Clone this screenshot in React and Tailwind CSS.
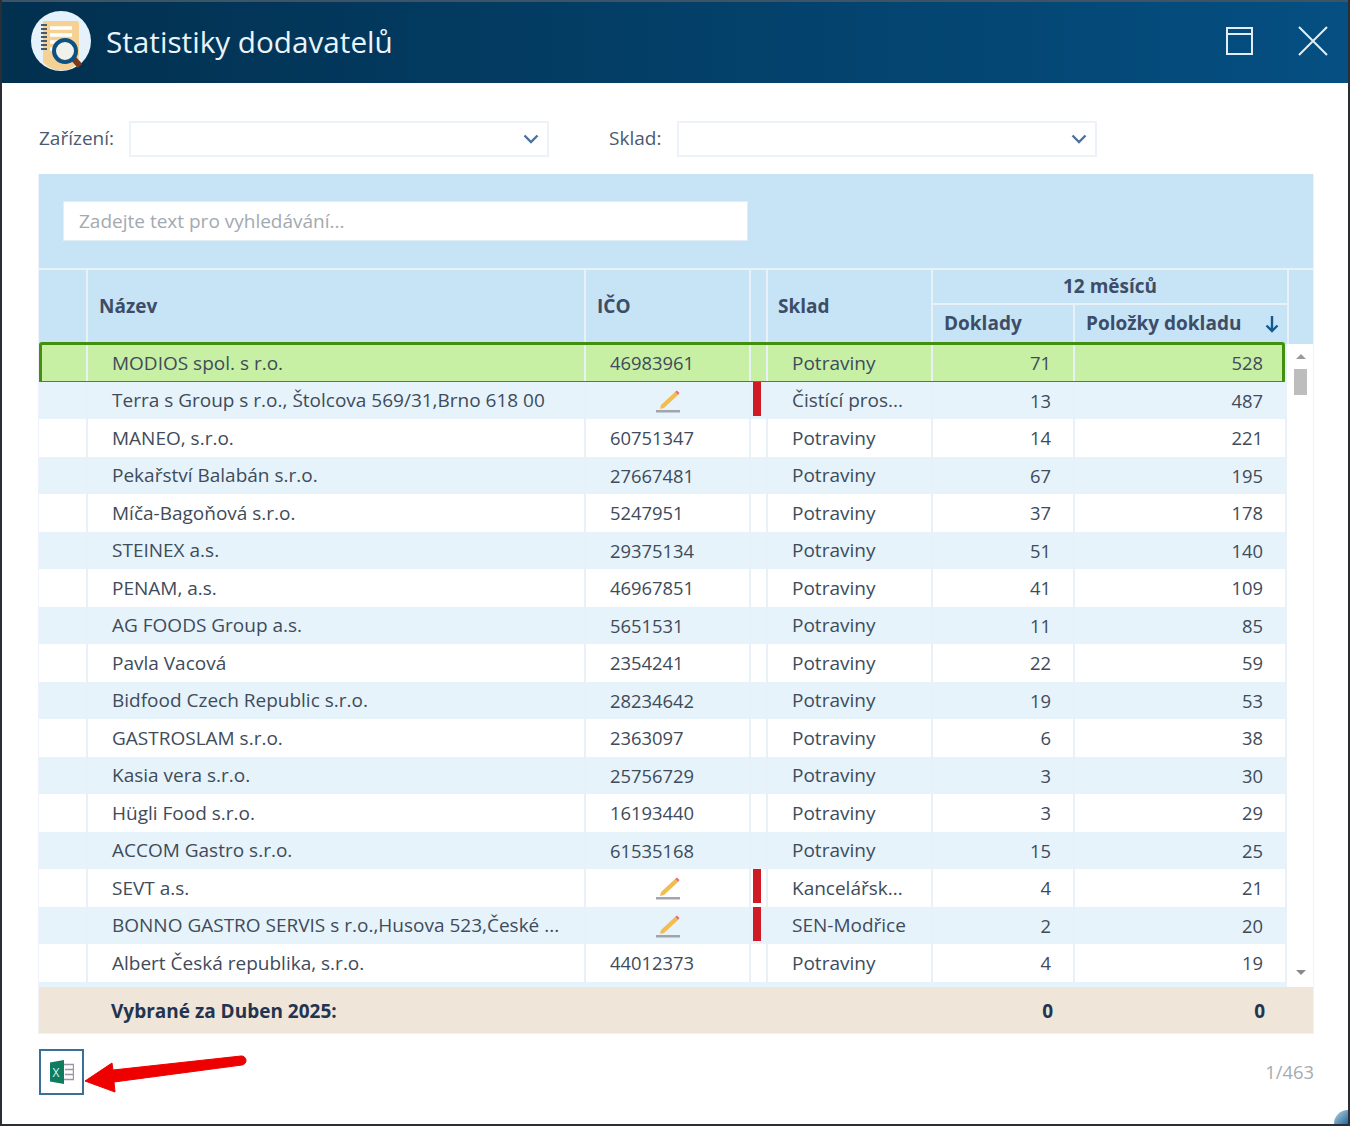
import React from 'react';

const rows = [
  { name: 'MODIOS spol. s r.o.', ico: '46983961', sklad: 'Potraviny', doklady: 71, polozky: 528 },
  { name: 'Terra s Group s r.o., Štolcova 569/31,Brno 618 00', edit: true, sklad: 'Čistící pros...', doklady: 13, polozky: 487 },
  { name: 'MANEO, s.r.o.', ico: '60751347', sklad: 'Potraviny', doklady: 14, polozky: 221 },
  { name: 'Pekařství Balabán s.r.o.', ico: '27667481', sklad: 'Potraviny', doklady: 67, polozky: 195 },
  { name: 'Míča-Bagoňová s.r.o.', ico: '5247951', sklad: 'Potraviny', doklady: 37, polozky: 178 },
  { name: 'STEINEX a.s.', ico: '29375134', sklad: 'Potraviny', doklady: 51, polozky: 140 },
  { name: 'PENAM, a.s.', ico: '46967851', sklad: 'Potraviny', doklady: 41, polozky: 109 },
  { name: 'AG FOODS Group a.s.', ico: '5651531', sklad: 'Potraviny', doklady: 11, polozky: 85 },
  { name: 'Pavla Vacová', ico: '2354241', sklad: 'Potraviny', doklady: 22, polozky: 59 },
  { name: 'Bidfood Czech Republic s.r.o.', ico: '28234642', sklad: 'Potraviny', doklady: 19, polozky: 53 },
  { name: 'GASTROSLAM s.r.o.', ico: '2363097', sklad: 'Potraviny', doklady: 6, polozky: 38 },
  { name: 'Kasia vera s.r.o.', ico: '25756729', sklad: 'Potraviny', doklady: 3, polozky: 30 },
  { name: 'Hügli Food s.r.o.', ico: '16193440', sklad: 'Potraviny', doklady: 3, polozky: 29 },
  { name: 'ACCOM Gastro s.r.o.', ico: '61535168', sklad: 'Potraviny', doklady: 15, polozky: 25 },
  { name: 'SEVT a.s.', edit: true, sklad: 'Kancelářsk...', doklady: 4, polozky: 21 },
  { name: 'BONNO GASTRO SERVIS s r.o.,Husova 523,České ...', edit: true, sklad: 'SEN-Modřice', doklady: 2, polozky: 20 },
  { name: 'Albert Česká republika, s.r.o.', ico: '44012373', sklad: 'Potraviny', doklady: 4, polozky: 19 },
];

const Logo = () => (
  <svg width="62" height="62" viewBox="0 0 62 62">
    <circle cx="31" cy="31" r="30" fill="#e6f2fb" />
    <path d="M13 11 H46 a3 3 0 0 1 3 3 V46 a15 15 0 0 1 -12 14 H25 A30 30 0 0 1 13 52 Z" fill="#f5d193" />
    <path d="M11 15h6M11 19h6M11 23h6M11 27h6M11 31h6M11 35h6M11 39h6" stroke="#4b5a66" strokeWidth="2" />
    <path d="M20 18h22M20 25h22M20 32h8M20 39h6" stroke="#fff" strokeWidth="3.5" />
    <path d="M43 48 L50 56" stroke="#7a3a1e" strokeWidth="6" />
    <circle cx="35" cy="41" r="11" fill="#f1f1ec" stroke="#0d5183" strokeWidth="4" />
  </svg>
);

const Chevron = () => (
  <svg width="16" height="10" viewBox="0 0 16 10" fill="none" stroke="#4a739f" strokeWidth="2.4">
    <path d="M1.5 1.5 L8 8 L14.5 1.5" />
  </svg>
);

const Pencil = () => (
  <svg width="26" height="24" viewBox="0 0 26 24">
    <path d="M6 16 L20 3 L23 6 L9 19 L5 20 Z" fill="#f3bc4f" />
    <path d="M20 3 L22 1.5 L24.5 4 L23 6 Z" fill="#e8736a" />
    <rect x="1" y="21" width="24" height="2.5" fill="#a3a3b0" />
  </svg>
);

const ExcelIcon = () => (
  <svg width="24" height="24" viewBox="0 0 24 24">
    <path d="M0 2.5 L14 0 V24 L0 21.5 Z" fill="#0f7b5f" />
    <path d="M14 4.5 H23.5 V19.5 H14" fill="none" stroke="#a095a8" strokeWidth="1.4" />
    <path d="M15 9.5 H23.5 M15 14.5 H23.5" stroke="#a095a8" strokeWidth="1.4" />
    <text x="2.5" y="16.5" fill="#dff3ec" fontSize="12" fontFamily="Open Sans, sans-serif">X</text>
  </svg>
);

const Select = ({ width }) => (
  <div className={`${width} h-[36px] border-2 border-[#edf2f8] flex items-center justify-end pr-[8px]`}>
    <Chevron />
  </div>
);

const gridCols = 'grid grid-cols-[49px_498px_165px_17px_165px_142px_212px]';

const Row = ({ row, index }) => {
  const selected = index === 0;
  const bg = selected ? 'bg-[#c7f0a5]' : index % 2 === 1 ? 'bg-[#e6f3fb]' : 'bg-white';
  const line = 'border-[#e8f1f8]';
  return (
    <div className={`${gridCols} ${bg} h-[37.5px] relative text-[19px] text-[#404b5a] leading-none`}>
      <div className={`border-r-2 ${line}`} />
      <div className={`border-r-2 ${line} pl-[24px] pt-[1px] flex items-center whitespace-nowrap overflow-hidden`}>{row.name}</div>
      <div className={`border-r-2 ${line} pl-[24px] pt-[1px] flex items-center text-[18.4px]`}>
        {row.edit ? <div className="ml-[45px]"><Pencil /></div> : row.ico}
      </div>
      <div className={`border-r-2 ${line} flex items-start`}>
        {row.edit && <div className="w-[8px] h-[34px] ml-[2px] bg-[#cf1b26]" />}
      </div>
      <div className={`border-r-2 ${line} pl-[24px] pt-[1px] flex items-center whitespace-nowrap`}>{row.sklad}</div>
      <div className={`border-r-2 ${line} pr-[22px] pt-[1px] flex items-center justify-end text-[18.4px]`}>{row.doklady}</div>
      <div className="pr-[24px] pt-[1px] flex items-center justify-end text-[18.4px]">{row.polozky}</div>
      {selected && (
        <div className="absolute left-0 -top-[2px] -bottom-[2px] right-0 border-[3px] border-[#43900f] rounded-[3px] pointer-events-none" />
      )}
    </div>
  );
};

export default function App() {
  return (
    <div className="w-[1350px] h-[1126px] bg-white border-x-2 border-b-2 border-[#2a2f36] font-['Open_Sans',sans-serif] overflow-hidden relative">
      <div className="h-[83px] -mx-[2px] border-t-2 border-[#3d5466] bg-gradient-to-r from-[#02304f] to-[#054f82] flex items-center pl-[30px] pr-[22px] pb-[4px]">
        <Logo />
        <div className="ml-[14px] pt-[3px] text-[29.7px] text-[#eaf4fb] leading-none">Statistiky dodavatelů</div>
        <div className="ml-auto flex items-center gap-[45px]">
          <svg width="27" height="28" viewBox="0 0 27 28" fill="none" stroke="#e4edf4" strokeWidth="2">
            <rect x="1" y="1" width="25" height="26" />
            <path d="M1 7 H26" />
          </svg>
          <svg width="30" height="30" viewBox="0 0 30 30" fill="none" stroke="#e4edf4" strokeWidth="2">
            <path d="M1 1 L29 29 M29 1 L1 29" />
          </svg>
        </div>
      </div>

      <div className="pl-[36px] pr-[35px]">
        <div className="flex items-center pl-px pt-[20px] h-[91px] text-[19px] text-[#4a5a70]">
          <div className="w-[90px] whitespace-nowrap">Zařízení:</div>
          <Select width="w-[420px]" />
          <div className="ml-[60px] w-[68px]">Sklad:</div>
          <Select width="w-[420px]" />
        </div>

        <div className="w-[1276px] border border-[#edf3f9] border-t-0">
          <div className="h-[94px] bg-[#c6e4f6] flex items-start pt-[27px] pl-[24px]">
            <div className="w-[685px] h-[40px] bg-white border border-[#e3edf5] flex items-center pl-[15px] text-[19px] text-[#a3a9b0]">
              Zadejte text pro vyhledávání...
            </div>
          </div>

          <div className="flex border-t-2 border-[#e8f1f8] bg-[#c6e4f6] h-[76px] text-[19px] font-bold text-[#3d4d68] leading-none">
            <div className="w-[49px] border-r-2 border-[#e8f1f8]" />
            <div className="w-[498px] border-r-2 border-[#e8f1f8] pl-[11px] pb-[2px] flex items-center">Název</div>
            <div className="w-[165px] border-r-2 border-[#e8f1f8] pl-[11px] pb-[2px] flex items-center">IČO</div>
            <div className="w-[17px] border-r-2 border-[#e8f1f8]" />
            <div className="w-[165px] border-r-2 border-[#e8f1f8] pl-[10px] pb-[2px] flex items-center">Sklad</div>
            <div className="w-[354px] flex flex-col">
              <div className="h-[35px] border-b-2 border-[#e8f1f8] flex items-center justify-center">12 měsíců</div>
              <div className="flex-1 flex pb-[2px]">
                <div className="w-[142px] -mb-[2px] border-r-2 border-[#e8f1f8] pl-[11px] pb-[2px] flex items-center">Doklady</div>
                <div className="flex-1 pl-[11px] flex items-center">
                  Položky dokladu
                  <svg className="ml-[23px]" width="16" height="18" viewBox="0 0 16 18" fill="none" stroke="#115a92" strokeWidth="2.4">
                    <path d="M8 1 V16 M2.5 10.5 L8 16 L13.5 10.5" />
                  </svg>
                </div>
              </div>
            </div>
            <div className="flex-1 border-l-2 border-[#e8f1f8]" />
          </div>

          <div className="flex">
            <div className="w-[1248px] border-r-2 border-[#e8f1f8]">
              <div className="border-b-[5px] border-[#e6f3fb]">
                {rows.map((row, i) => <Row key={row.name} row={row} index={i} />)}
              </div>
            </div>
            <div className="flex-1 flex flex-col items-center pt-[10px] pl-[1px] relative">
              <div className="w-0 h-0 border-x-[5px] border-x-transparent border-b-[5px] border-b-[#9a9a9a]" />
              <div className="mt-[10px] w-[13px] h-[26px] bg-[#bdbdbd]" />
              <div className="absolute bottom-[12px] w-0 h-0 border-x-[5px] border-x-transparent border-t-[5px] border-t-[#8a8a8a]" />
            </div>
          </div>

          <div className="h-[46px] bg-[#efe5d8] flex items-center pt-[3px] text-[19px] font-bold text-[#22344f] leading-none">
            <div className="w-[1014px] pl-[72px] flex justify-between">
              <span>Vybrané za Duben 2025:</span>
              <span>0</span>
            </div>
            <div className="w-[212px] text-right">0</div>
          </div>
        </div>

        <div className="flex items-center justify-between mt-[15px] w-[1276px] pl-px">
          <div className="w-[45px] h-[46px] border-2 border-[#3a7098] flex items-center justify-center">
            <ExcelIcon />
          </div>
          <div className="text-[18.4px] text-[#a7abb0]">1/463</div>
        </div>
      </div>

      {/* red annotation arrow */}
      <svg className="absolute left-[81px] top-[1050px]" width="170" height="48" viewBox="0 0 170 48">
        <path d="M2 31 L29 13 L30 20 L158 6 a4.5 4.5 0 0 1 1 9 L31 32 L32 42 Z" fill="#ee0000" stroke="#ee0000" strokeLinejoin="round" />
      </svg>

      {/* resize corner */}
      <div className="absolute right-0 bottom-0 w-[14px] h-[14px] rounded-tl-full bg-gradient-to-br from-[#bcd7e8] to-[#1d6a9a]" />
    </div>
  );
}
